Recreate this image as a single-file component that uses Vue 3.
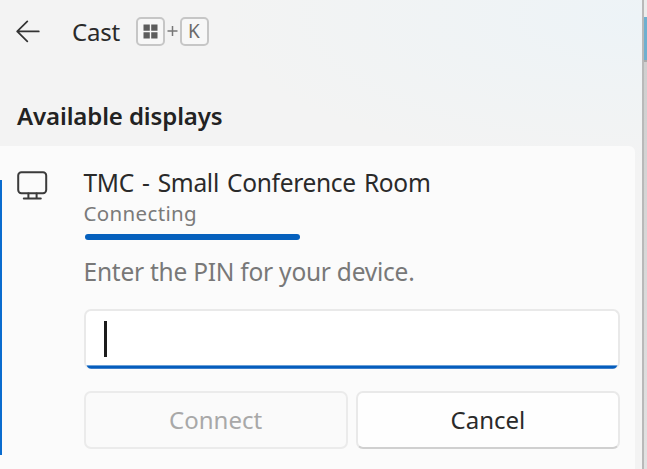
<script setup>
import { ref } from 'vue'

const heading = 'Available displays'
const device = { name: 'TMC - Small Conference Room', status: 'Connecting' }
const progress = ref(40.2)
</script>

<template>
  <div class="screen">
    <main class="panel">
      <header class="header">
        <svg class="back" width="24" height="24" viewBox="0 0 24 24">
          <path d="M22.8 12.4H1.2M11.3 2.4L1.2 12.4L11.3 22.4" />
        </svg>
        <h1 class="title">Cast</h1>
        <div class="shortcut">
          <kbd class="key">
            <svg width="15" height="15" viewBox="0 0 15 15">
              <path d="M.5.5h6.3v6.3H.5zM8.2.5h6.3v6.3H8.2zM.5 8.2h6.3v6.3H.5zM8.2 8.2h6.3v6.3H8.2z" />
            </svg>
          </kbd>
          <svg class="plus" width="15" height="12" viewBox="0 0 15 12">
            <path d="M7.5 1v10M2.5 6h10" />
          </svg>
          <kbd class="key">K</kbd>
        </div>
      </header>
      <h2 class="heading">{{ heading }}</h2>
      <section class="card">
        <div class="accent"></div>
        <svg class="monitor" width="31" height="30" viewBox="0 0 31 30">
          <rect x="1.2" y="1.2" width="28" height="21" rx="3.2" />
          <path d="M11.4 22.5v5M19.6 22.5v5M6.8 27.6h17" />
        </svg>
        <div class="body">
          <div class="name">{{ device.name }}</div>
          <div class="status">{{ device.status }}</div>
          <div class="track"><div class="bar" :style="{ width: progress + '%' }"></div></div>
          <div class="prompt">Enter the PIN for your device.</div>
          <div class="pin"><span class="caret"></span></div>
          <div class="actions">
            <button class="btn disabled" disabled>Connect</button>
            <button class="btn">Cancel</button>
          </div>
        </div>
      </section>
    </main>
    <aside class="edge">
      <div class="edge-top"></div>
      <div class="edge-blue"></div>
      <div class="edge-rest"></div>
    </aside>
  </div>
</template>

<style>
body {
  overflow: hidden;
}
</style>

<style scoped>
* {
  box-sizing: border-box;
}
.screen {
  display: flex;
  width: 647px;
  height: 469px;
  overflow: hidden;
  font-family: "Noto Sans", "Open Sans", sans-serif;
  color: #2a2a2a;
}
.panel {
  width: 642px;
  display: flex;
  flex-direction: column;
  background: radial-gradient(ellipse 420px 150px at 100% 18px, #edf3f7 0%, rgba(238, 243, 246, 0.6) 50%, rgba(243, 243, 243, 0) 100%), #f3f3f3;
}
.header {
  height: 64px;
  display: flex;
  align-items: center;
  padding-left: 16px;
}
.back {
  margin-top: -3px;
  fill: none;
  stroke: #333;
  stroke-width: 1.7;
  stroke-linecap: round;
  stroke-linejoin: round;
}
.title {
  width: 63.5px;
  margin: 0 0 0 32px;
  font-size: 24px;
  line-height: 32px;
  font-weight: 400;
  letter-spacing: -0.2px;
  white-space: nowrap;
}
.shortcut {
  display: flex;
  align-items: center;
  margin-top: -2px;
}
.key {
  width: 29px;
  height: 29px;
  display: flex;
  align-items: center;
  justify-content: center;
  border: 2px solid #c6c6c6;
  border-radius: 5px;
  background: #f7f7f7;
  font-family: inherit;
  font-size: 19px;
  line-height: 24px;
  color: #6a6a6a;
}
.key svg {
  fill: #5c5c5c;
}
.plus {
  fill: none;
  stroke: #777;
  stroke-width: 1.5;
}
.heading {
  height: 82px;
  margin: 0;
  padding: 36px 0 0 17px;
  font-size: 24px;
  line-height: 32px;
  font-weight: 600;
  letter-spacing: -0.11px;
  color: #222;
  white-space: nowrap;
}
.card {
  width: 635px;
  height: 323px;
  display: flex;
  background: #fbfbfb;
  border-radius: 0 6px 0 0;
}
.accent {
  width: 1.5px;
  height: 275px;
  margin-top: 34px;
  background: #0a6ccf;
}
.monitor {
  margin: 25px 0 0 15px;
  fill: none;
  stroke: #3b3b3b;
  stroke-width: 2;
  stroke-linecap: round;
}
.body {
  width: 536.5px;
  margin-left: 36px;
  padding-top: 20px;
  white-space: nowrap;
}
.name {
  height: 34px;
  font-size: 24.5px;
  line-height: 33px;
  letter-spacing: -0.3px;
  word-spacing: 2px;
}
.status {
  height: 34px;
  font-size: 20.5px;
  line-height: 26px;
  letter-spacing: 0.35px;
  color: #7a7a7a;
}
.track {
  height: 6px;
  padding-left: 1.5px;
}
.bar {
  height: 6px;
  border-radius: 3px;
  background: #0560bd;
}
.prompt {
  height: 69px;
  padding-top: 15px;
  font-size: 24.5px;
  line-height: 33px;
  letter-spacing: -0.24px;
  color: #787878;
}
.pin {
  position: relative;
  height: 60px;
  display: flex;
  align-items: flex-start;
  padding: 10px 0 0 18px;
  border: 2px solid #e9e9e9;
  border-bottom: 0;
  border-radius: 7px;
  background: #fff;
  overflow: hidden;
}
.pin::after {
  content: "";
  position: absolute;
  left: -2px;
  right: -2px;
  bottom: 0;
  height: 4px;
  background: linear-gradient(#6ba0d8 0 1px, #055dbd 1px 3px, #3f80cb 3px);
}
.caret {
  width: 3px;
  height: 36px;
  background: #1c1c1c;
}
.actions {
  display: grid;
  grid-template-columns: 1fr 1fr;
  gap: 8px;
  padding-top: 22px;
}
.btn {
  height: 58px;
  padding: 0;
  border: 2px solid #e9e9e9;
  border-bottom-color: #d0d0d0;
  border-radius: 7px;
  background: #fefefe;
  font-family: inherit;
  font-size: 24px;
  line-height: 32px;
  color: #2a2a2a;
}
.disabled {
  border-color: #ebebeb;
  background: #fafafa;
  color: #a8a8a8;
}
.edge {
  width: 5px;
  display: flex;
  flex-direction: column;
  border-left: 2px solid #b9b9b9;
}
.edge-top {
  height: 17px;
  background: #ececec;
}
.edge-blue {
  height: 43px;
  background: #6eafcf;
}
.edge-rest {
  flex: 1;
  border-top: 2px solid #aaa;
  background: linear-gradient(#cfcfcf, #e2e2e2);
}
</style>
